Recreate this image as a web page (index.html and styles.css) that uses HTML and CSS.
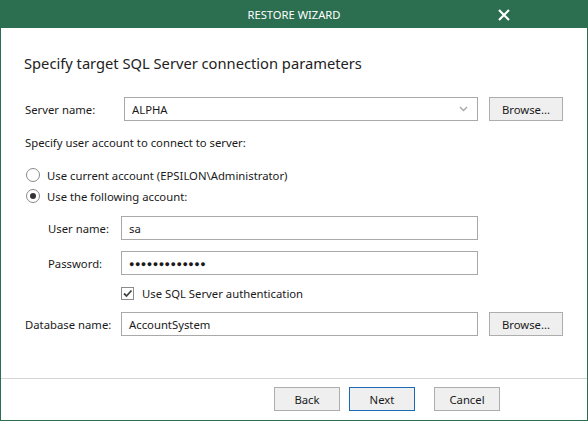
FILE: index.html
```html
<!DOCTYPE html>
<html lang="en">
<head>
    <meta charset="UTF-8">
    <title>Restore Wizard</title>
    <link rel="stylesheet" href="styles.css">
</head>
<body>

<div class="window">
    <div class="titlebar">
        <span></span>
        <span class="title">RESTORE WIZARD</span>
        <span class="close">
            <svg width="12" height="12" viewBox="0 0 12 12"><path d="M1 1 L11 11 M11 1 L1 11" stroke="#fff" stroke-width="2.2"/></svg>
        </span>
    </div>

    <div class="content">
        <h1>Specify target SQL Server connection parameters</h1>

        <div class="row row-server">
            <span class="label">Server name:</span>
            <div class="field combo">
                <span>ALPHA</span>
                <svg width="9" height="6" viewBox="0 0 9 6"><path d="M1 1 L4.5 4.5 L8 1" fill="none" stroke="#a8a8a8" stroke-width="1.4"/></svg>
            </div>
            <button class="btn">Browse...</button>
        </div>

        <div class="section-label">Specify user account to connect to server:</div>

        <div class="radio-row first">
            <span class="radio"></span>
            <span>Use current account (EPSILON\Administrator)</span>
        </div>
        <div class="radio-row">
            <span class="radio checked"></span>
            <span>Use the following account:</span>
        </div>

        <div class="row row-indent first-indent">
            <span class="label">User name:</span>
            <div class="field">sa</div>
        </div>
        <div class="row row-indent">
            <span class="label">Password:</span>
            <div class="field password">●●●●●●●●●●●●●</div>
        </div>

        <div class="check-row">
            <span class="checkbox">
                <svg width="11" height="11" viewBox="0 0 11 11"><path d="M2 5.5 L4.5 8 L9.5 2.5" fill="none" stroke="#444" stroke-width="1.8"/></svg>
            </span>
            <span>Use SQL Server authentication</span>
        </div>

        <div class="row row-db">
            <span class="label">Database name:</span>
            <div class="field">AccountSystem</div>
            <button class="btn">Browse...</button>
        </div>
    </div>

    <div class="footer">
        <button class="btn btn-foot">Back</button>
        <button class="btn btn-foot btn-default">Next</button>
        <button class="btn btn-foot btn-cancel">Cancel</button>
    </div>
</div>

</body>
</html>
```

FILE: styles.css
```css
body {
    margin: 0;
    font-family: "Noto Sans", "Open Sans", sans-serif;
    font-size: 11.3px;
    color: #1a1a1a;
    background: #fff;
}
.window {
    width: 588px;
    height: 421px;
    box-sizing: border-box;
    border: 1px solid #2b6e50;
    border-top: none;
    display: flex;
    flex-direction: column;
}
.titlebar {
    height: 28px;
    margin: 0 -1px;
    background-color: #2b6e50;
    color: #fff;
    display: grid;
    grid-template-columns: 1fr auto 1fr;
    align-items: center;
}
.title {
    font-size: 11.2px;
}
.close {
    justify-self: end;
    margin-right: 78px;
    display: flex;
    margin-top: 1px;
}
.content {
    flex: 1;
    padding-left: 23px;
}
h1 {
    font-weight: normal;
    font-size: 14.7px;
    line-height: 20px;
    margin: 25px 0 0;
    color: #222;
}
.row {
    display: grid;
    align-items: center;
    column-gap: 11px;
    height: 24px;
}
.label {
    white-space: nowrap;
}
.row-server {
    margin-top: 24px;
    padding-left: 1px;
    grid-template-columns: 88px 354px 74px;
}
.row-db {
    margin-top: 10px;
    padding-left: 1px;
    grid-template-columns: 85px 357px 74px;
}
.row-indent {
    margin-top: 11px;
    padding-left: 24px;
    grid-template-columns: 73px 357px;
    column-gap: 0;
}
.first-indent {
    margin-top: 10px;
}
.field {
    height: 24px;
    box-sizing: border-box;
    border: 1px solid #a9a9a9;
    padding: 0 7px;
    display: flex;
    align-items: center;
}
.combo {
    justify-content: space-between;
    padding-right: 9px;
}
.password {
    font-size: 9px;
    letter-spacing: 0.5px;
}
.btn {
    height: 24px;
    box-sizing: border-box;
    border: 1px solid #adadad;
    background-color: #efefef;
    font-family: inherit;
    font-size: 11.3px;
    color: #1a1a1a;
    padding: 0;
}
.section-label {
    margin-top: 14px;
    line-height: 16px;
    padding-left: 1px;
}
.radio-row {
    display: flex;
    align-items: center;
    height: 20px;
    gap: 7px;
    margin-top: 1px;
    padding-left: 2px;
}
.radio-row.first {
    margin-top: 14px;
}
.radio {
    width: 12px;
    height: 12px;
    border: 1px solid #8a8a8a;
    border-radius: 50%;
    display: flex;
    align-items: center;
    justify-content: center;
}
.radio.checked::after {
    content: "";
    width: 6px;
    height: 6px;
    border-radius: 50%;
    background-color: #333;
}
.check-row {
    display: flex;
    align-items: center;
    gap: 8px;
    height: 17px;
    margin-top: 10px;
    padding-left: 97px;
}
.checkbox {
    width: 11px;
    height: 11px;
    border: 1px solid #8a8a8a;
    display: flex;
    align-items: center;
    justify-content: center;
}
.footer {
    height: 42px;
    box-sizing: border-box;
    border-top: 1px solid #d4d4d4;
    display: flex;
    justify-content: flex-end;
    align-items: flex-start;
    padding: 8px 87px 0 0;
}
.btn-foot {
    width: 66px;
    margin-left: 9px;
}
.btn-default {
    border-color: #1c6ab3;
}
.btn-cancel {
    margin-left: 19px;
}
```
